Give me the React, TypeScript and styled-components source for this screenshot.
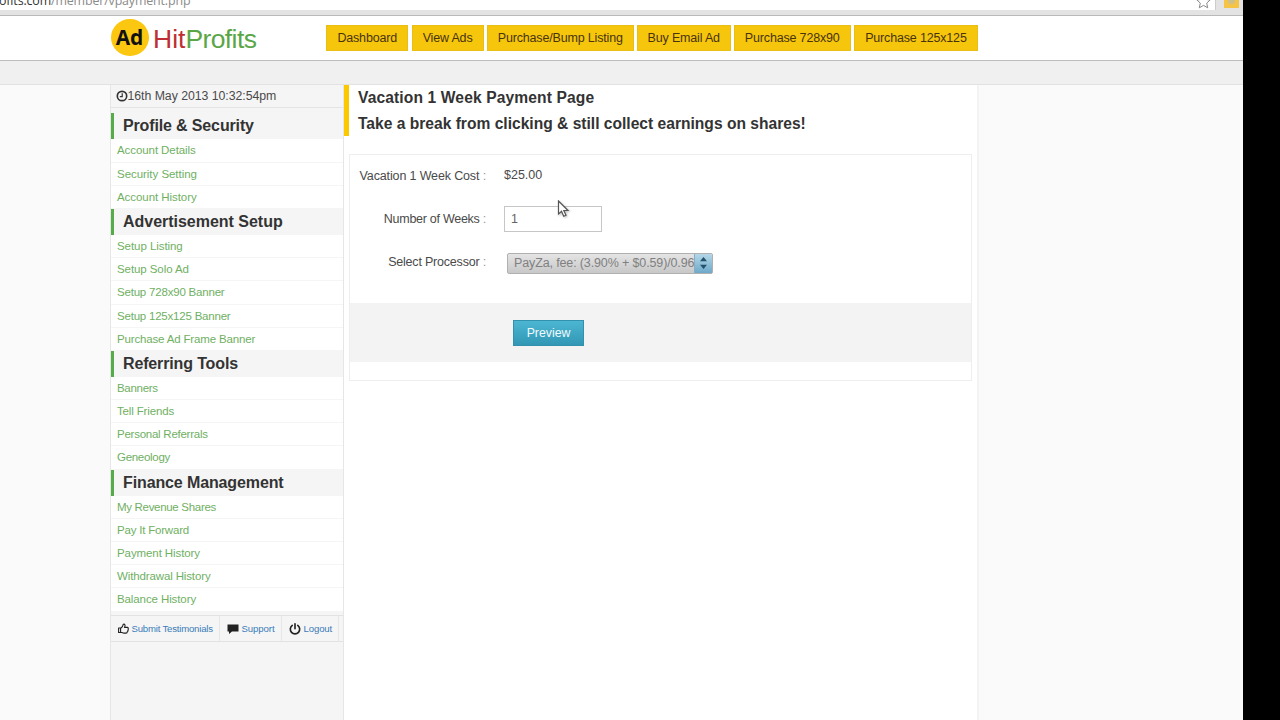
import React from 'react';
import styled, { createGlobalStyle } from 'styled-components';

const Global = createGlobalStyle`
  * { box-sizing: border-box; }
  html, body { margin: 0; background: #000; overflow: hidden; }
  body { font-family: "Liberation Sans", Arial, sans-serif; color: #333; }
`;

const Page = styled.div`
  position: relative;
  width: 1243px;
  height: 720px;
  overflow: hidden;
  display: flex;
  flex-direction: column;
  background: #fafafa;
`;
const BrowserBar = styled.div`
  height: 16px;
  flex: none;
  display: flex;
  background: #e3e3e3;
  border-bottom: 1px solid #b9b9b9;
  overflow: hidden;
`;
const AddressField = styled.div`
  width: 1216px;
  height: 10px;
  display: flex;
  justify-content: space-between;
  background: #fff;
  border-right: 1px solid #ccc;
  overflow: hidden;
`;
const Url = styled.div`
  margin: -8px 0 0 -1px;
  font: 12.4px/18px "Open Sans", sans-serif;
  letter-spacing: -0.13px;
  color: #8a8a8a;
  white-space: nowrap;
  b { font-weight: 400; color: #333; }
`;
const StarIcon = styled.svg`
  margin: -6px 4px 0 0;
  flex: none;
`;
const Extension = styled.div`
  width: 15px;
  height: 8px;
  margin-left: 8px;
  background: radial-gradient(circle at 50% 10%, #cfc08a 0 3px, #f6c445 4px);
`;
const Header = styled.header`
  height: 45px;
  flex: none;
  display: flex;
  padding-left: 110px;
  background: #fff;
  border-bottom: 1px solid #bdbdbd;
`;
const Logo = styled.div`
  width: 216px;
  display: flex;
  padding: 2.5px 0 0 0.5px;
`;
const LogoDisc = styled.div`
  width: 38px;
  height: 37.5px;
  border-radius: 50%;
  background: #fbc711;
  color: #111;
  font: bold 20.8px/36px "Noto Sans", sans-serif;
  text-align: center;
`;
const LogoName = styled.div`
  margin: 3.5px 0 0 4.5px;
  font-size: 26.5px;
  line-height: 34px;
  letter-spacing: -0.6px;
  color: #5aa646;
  white-space: nowrap;
  span { color: #bd2f33; letter-spacing: 0; }
`;
const Nav = styled.nav`
  display: flex;
  align-items: flex-start;
  padding-top: 9px;
  gap: 3.2px;
`;
const NavButton = styled.a<{ $w: number }>`
  width: ${p => p.$w}px;
  height: 26px;
  background: #f6c60c;
  border: 1px solid #e9be17;
  color: #48330c;
  font-size: 12.5px;
  line-height: 24px;
  letter-spacing: -0.17px;
  text-align: center;
  white-space: nowrap;
`;
const Band = styled.div`
  height: 24px;
  flex: none;
  background: #f0f0f0;
  border-bottom: 1px solid #e2e2e2;
`;
const Content = styled.div`
  flex: 1;
  display: flex;
  padding-left: 110px;
`;
const Sidebar = styled.aside`
  width: 233px;
  display: flex;
  flex-direction: column;
  background: #f5f5f5;
  border-left: 1px solid #e6e6e6;
`;
const Clock = styled.div`
  height: 23px;
  display: flex;
  align-items: center;
  padding-left: 4.5px;
  font-size: 12.3px;
  letter-spacing: -0.04px;
  color: #4a4a4a;
  border-bottom: 1px solid #e4e4e4;
  white-space: nowrap;
`;
const Menu = styled.div`
  height: 503px;
  padding-top: 5.4px;
`;
const SectionTitle = styled.h3<{ $ls: number }>`
  height: 26px;
  margin: 0;
  padding-left: 9px;
  border-left: 3.4px solid #56ab4b;
  background: #f5f5f5;
  font-size: 16px;
  line-height: 26px;
  letter-spacing: ${p => p.$ls}px;
  color: #333;
  white-space: nowrap;
`;
const MenuList = styled.ul`
  margin: 0;
  padding: 0;
  list-style: none;
  background: #fff;
`;
const MenuItem = styled.li<{ $ls: number }>`
  height: 23.2px;
  padding-left: 6px;
  border-bottom: 1px solid #f5f5f5;
  font-size: 11.5px;
  line-height: 23.2px;
  letter-spacing: ${p => p.$ls}px;
  color: #6fb063;
  white-space: nowrap;
`;
const Tools = styled.div`
  height: 27px;
  margin-top: 4px;
  display: flex;
  border-top: 1px solid #e2e2e2;
  border-bottom: 1px solid #e2e2e2;
`;
const Tool = styled.a<{ $w: number; $ls: number }>`
  width: ${p => p.$w}px;
  display: flex;
  align-items: center;
  gap: 3px;
  padding-left: 6.5px;
  border-right: 1px solid #e6e6e6;
  font-size: 9.6px;
  letter-spacing: ${p => p.$ls}px;
  color: #3a7cb8;
  white-space: nowrap;
  svg { flex: none; }
`;
const Main = styled.main`
  width: 636px;
  background: #fff;
  border-left: 1px solid #e6e6e6;
  border-right: 2px solid #f3f3f3;
`;
const PageTitle = styled.div`
  height: 51px;
  border-left: 5px solid #fcc800;
  padding-left: 9px;
  font-weight: bold;
  font-size: 15.6px;
  line-height: 26px;
  white-space: nowrap;
`;
const TitleLine = styled.div<{ $ls: number }>`
  letter-spacing: ${p => p.$ls}px;
`;
const Form = styled.form`
  width: 623px;
  height: 227px;
  margin: 18px 0 0 5px;
  border: 1px solid #eee;
`;
const Fields = styled.div`
  height: 148px;
  display: flex;
  flex-direction: column;
`;
const Field = styled.div`
  height: 43px;
  flex: none;
  display: flex;
  align-items: center;
  font-size: 12.5px;
  color: #4a4a4a;
`;
const Label = styled.label<{ $ls: number }>`
  width: 136px;
  margin-right: 18px;
  padding-bottom: 2px;
  text-align: right;
  letter-spacing: ${p => p.$ls}px;
  white-space: nowrap;
  i { color: #999; font-style: normal; }
`;
const Cost = styled.span`
  padding-bottom: 3px;
`;
const NumberBox = styled.div`
  width: 98px;
  height: 26px;
  margin-bottom: 2px;
  padding-left: 6px;
  border: 1px solid #c6c6c6;
  line-height: 25px;
  color: #666;
`;
const Select = styled.div`
  width: 206px;
  height: 21px;
  margin: 1px 0 0 3px;
  display: flex;
  border: 1px solid #b0b0b0;
  border-radius: 2px;
  background: linear-gradient(#e4e4e4, #c8c8c8);
`;
const SelectText = styled.div`
  flex: 1;
  min-width: 0;
  padding-left: 6px;
  font-size: 12.5px;
  line-height: 19px;
  letter-spacing: -0.13px;
  color: #808080;
  white-space: nowrap;
`;
const Spinner = styled.div`
  width: 18px;
  flex: none;
  display: flex;
  align-items: center;
  justify-content: center;
  background: linear-gradient(#b5d7e8, #6ea9c9);
  border-left: 1px solid #83aec4;
`;
const Actions = styled.div`
  height: 59px;
  padding: 16.5px 0 0 163px;
  background: #f3f3f3;
`;
const Preview = styled.div`
  width: 71px;
  height: 26px;
  border: 1px solid #3292ae;
  background: linear-gradient(#4cb6d2, #3197b5);
  color: #f0fafc;
  font-size: 12.3px;
  line-height: 24px;
  text-align: center;
`;
const Cursor = styled.svg`
  position: absolute;
  left: 556.5px;
  top: 199.5px;
  filter: drop-shadow(1px 1px 1px rgba(0, 0, 0, 0.25));
`;

const nav = [
  ['Dashboard', 82.4], ['View Ads', 72], ['Purchase/Bump Listing', 147],
  ['Buy Email Ad', 93.6], ['Purchase 728x90', 117], ['Purchase 125x125', 124],
] as const;

type Entry = [string, number];
const sections: { title: string; ls: number; items: Entry[] }[] = [
  {
    title: 'Profile & Security', ls: -0.14,
    items: [['Account Details', -0.08], ['Security Setting', -0.04], ['Account History', -0.06]],
  },
  {
    title: 'Advertisement Setup', ls: -0.02,
    items: [['Setup Listing', -0.06], ['Setup Solo Ad', -0.08], ['Setup 728x90 Banner', -0.2],
      ['Setup 125x125 Banner', -0.21], ['Purchase Ad Frame Banner', -0.16]],
  },
  {
    title: 'Referring Tools', ls: -0.14,
    items: [['Banners', -0.3], ['Tell Friends', -0.15], ['Personal Referrals', -0.25], ['Geneology', -0.29]],
  },
  {
    title: 'Finance Management', ls: -0.12,
    items: [['My Revenue Shares', -0.31], ['Pay It Forward', -0.2], ['Payment History', -0.09],
      ['Withdrawal History', -0.13], ['Balance History', -0.1]],
  },
];

export default function App() {
  return (
    <>
      <Global />
      <Page>
        <BrowserBar>
          <AddressField>
            <Url><b>ofits.com</b>/member/vpayment.php</Url>
            <StarIcon width="15" height="15" viewBox="0 0 15 15">
              <path d="M7.5 1l2 4.400 4.700.5-3.500 3.200 1 4.700-4.200-2.400-4.200 2.400 1-4.700L.8 5.900l4.700-.5z" fill="#fff" stroke="#888" />
            </StarIcon>
          </AddressField>
          <Extension />
        </BrowserBar>
        <Header>
          <Logo>
            <LogoDisc>Ad</LogoDisc>
            <LogoName><span>Hit</span>Profits</LogoName>
          </Logo>
          <Nav>
            {nav.map(([label, w]) => <NavButton key={label} $w={w}>{label}</NavButton>)}
          </Nav>
        </Header>
        <Band />
        <Content>
          <Sidebar>
            <Clock>
              <svg width="12" height="12" viewBox="0 0 11 11" fill="none" stroke="#333">
                <circle cx="5.500" cy="5.500" r="4.300" strokeWidth="1.500" />
                <path d="M5.700 3v3H3.500" strokeWidth="1.100" />
              </svg>
              16th May 2013 10:32:54pm
            </Clock>
            <Menu>
              {sections.map(s => (
                <React.Fragment key={s.title}>
                  <SectionTitle $ls={s.ls}>{s.title}</SectionTitle>
                  <MenuList>
                    {s.items.map(([label, ls]) => <MenuItem key={label} $ls={ls}>{label}</MenuItem>)}
                  </MenuList>
                </React.Fragment>
              ))}
            </Menu>
            <Tools>
              <Tool $w={109} $ls={-0.2}>
                <svg width="11" height="11" viewBox="0 0 11 11" fill="none" stroke="#222" strokeWidth="1.100" strokeLinejoin="round">
                  <path d="M.6 5h2v4.500h-2zM2.800 5.300C4.500 4.500 5 3 5.300 1.200c1.700-.4 2.200 1.300 1.200 3.200h3c1 .2 1 1.200.5 1.500.5.6.3 1.300-.2 1.500.2.600 0 1.200-.5 1.400 0 1-.5 1.300-1.300 1.300H5.500L2.800 9.200" />
                </svg>
                Submit Testimonials
              </Tool>
              <Tool $w={62} $ls={-0.08}>
                <svg width="12" height="11" viewBox="0 0 12 11"><path d="M.5 1.500h11v7H5L2 11V8.500H.5z" fill="#222" /></svg>
                Support
              </Tool>
              <Tool $w={57} $ls={-0.12}>
                <svg width="12" height="12" viewBox="0 0 11 11" fill="none" stroke="#222" strokeWidth="1.500" strokeLinecap="round">
                  <path d="M5.500.8v4.400M3 2.200a4.300 4.300 0 1 0 5 0" />
                </svg>
                Logout
              </Tool>
            </Tools>
          </Sidebar>
          <Main>
            <PageTitle>
              <TitleLine $ls={0.12}>Vacation 1 Week Payment Page</TitleLine>
              <TitleLine $ls={0}>Take a break from clicking &amp; still collect earnings on shares!</TitleLine>
            </PageTitle>
            <Form>
              <Fields>
                <Field><Label $ls={-0.14}>Vacation 1 Week Cost <i>:</i></Label><Cost>$25.00</Cost></Field>
                <Field><Label $ls={-0.27}>Number of Weeks <i>:</i></Label><NumberBox>1</NumberBox></Field>
                <Field>
                  <Label $ls={-0.2}>Select Processor <i>:</i></Label>
                  <Select>
                    <SelectText>PayZa, fee: (3.90% + $0.59)/0.96</SelectText>
                    <Spinner>
                      <svg width="7" height="12" viewBox="0 0 7 12" fill="#24516b"><path d="M3.500 0L7 4.300H0zM3.500 12L7 7.700H0z" /></svg>
                    </Spinner>
                  </Select>
                </Field>
              </Fields>
              <Actions><Preview>Preview</Preview></Actions>
            </Form>
          </Main>
        </Content>
        <Cursor width="13" height="20" viewBox="0 0 13 20">
          <path d="M1.500 1v13l3-2.700 2.200 4.900 2.300-1-2.200-4.700h4.200z" fill="#fff" stroke="#555" strokeWidth="1.200" />
        </Cursor>
      </Page>
    </>
  );
}
